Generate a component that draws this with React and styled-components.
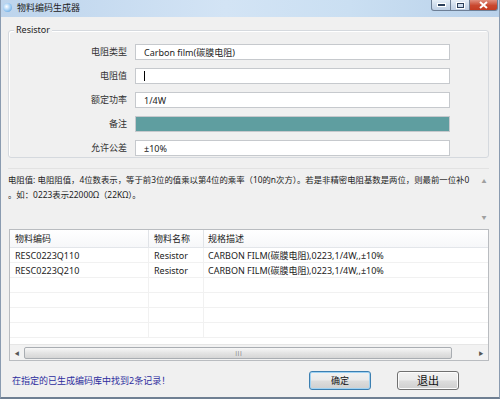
import React from 'react';
import styled, { createGlobalStyle } from 'styled-components';

const GlobalStyle = createGlobalStyle`
  html, body {
    margin: 0;
    padding: 0;
    background: #f0f0f0;
  }
  body {
    font-family: "Noto Sans", "Noto Sans CJK SC", sans-serif;
    font-size: 9px;
    color: #1e1e1e;
  }
`;

const Window = styled.div`
  width: 500px;
  height: 399px;
  box-sizing: border-box;
  display: flex;
  flex-direction: column;
  background: #f0f0f0;
  border-left: 1px solid #8a9bb0;
  border-right: 1px solid #8a9bb0;
  border-bottom: 2px solid #6f7f92;
  overflow: hidden;
`;

const TitleBar = styled.div`
  height: 17px;
  flex-shrink: 0;
  display: flex;
  align-items: flex-start;
  background: linear-gradient(90deg, #bdd4ec 0%, #d3e4f5 45%, #cadff2 70%, #b9d1ea 100%);
`;

const TitleIcon = styled.div`
  width: 9px;
  height: 9px;
  margin: 3px 5px 0 2px;
  border-radius: 50%;
  background: radial-gradient(circle at 40% 40%, #ffffff 0%, #8fc3f0 60%, #3d86c8 100%);
`;

const TitleText = styled.span`
  font-size: 9px;
  line-height: 15px;
  color: #222;
`;

const Controls = styled.div`
  margin-left: auto;
  margin-right: 1px;
  display: flex;
`;

const CtrlButton = styled.div`
  width: ${p => p.$w}px;
  height: 11px;
  box-sizing: border-box;
  display: flex;
  align-items: center;
  justify-content: center;
  border: 1px solid #6d7f96;
  border-top: none;
  margin-left: -1px;
  background: ${p => p.$close
    ? 'linear-gradient(#e0907f, #c9482f 55%, #c43c22)'
    : 'linear-gradient(#e6eef7, #cddbeb 55%, #bfd0e4)'};
  border-radius: ${p => p.$r || '0'};
`;

const Body = styled.div`
  flex: 1;
  display: flex;
  flex-direction: column;
  padding: 13px 10px 0 7px;
`;

const Group = styled.div`
  position: relative;
  height: 128px;
  box-sizing: border-box;
  border: 1px solid #d5d9de;
  border-radius: 3px;
  box-shadow: inset 1px 1px 0 #fff;
  padding: 13px 0 0 0;
`;

const Legend = styled.span`
  position: absolute;
  top: -7px;
  left: 5px;
  padding: 0 2px;
  background: #f0f0f0;
  font-size: 9px;
  line-height: 12px;
`;

const FieldGrid = styled.div`
  display: grid;
  grid-template-columns: 118px 315px;
  column-gap: 8px;
  row-gap: 8px;
  align-items: center;
`;

const Label = styled.div`
  text-align: right;
  font-size: 9px;
  line-height: 16px;
  color: #333;
`;

const Field = styled.div`
  height: 16px;
  box-sizing: border-box;
  border: 1px solid #c6c9cd;
  background: ${p => p.$bg || '#fff'};
  padding-left: 8px;
  display: flex;
  align-items: center;
  font-size: 9px;
  color: #222;
`;

const Caret = styled.span`
  width: 1px;
  height: 10px;
  background: #000;
`;

const Memo = styled.div`
  margin-top: 10px;
  height: 59px;
  box-sizing: border-box;
  border-top: 1px solid #e2e2e2;
  display: flex;
`;

const MemoText = styled.div`
  flex: 1;
  font-size: 8.4px;
  line-height: 15px;
  padding-top: 3px;
  color: #222;
  white-space: nowrap;
  overflow: hidden;
`;

const VScroll = styled.div`
  width: 10px;
  display: flex;
  flex-direction: column;
  justify-content: space-between;
  align-items: center;
  padding: 8px 0 7px;
  color: #a0a0a0;
  font-size: 5px;
`;

const List = styled.div`
  margin-top: 2px;
  margin-left: 1px;
  height: 132px;
  box-sizing: border-box;
  border: 1px solid #b9bcc0;
  background: #fff;
  display: flex;
  flex-direction: column;
`;

const Rows = styled.div`
  flex: 1;
  overflow: hidden;
`;

const Row = styled.div`
  display: grid;
  grid-template-columns: 139px 55px 1fr;
  height: ${p => (p.$head ? 18 : 15)}px;
  box-sizing: border-box;
  border-bottom: 1px solid ${p => (p.$head ? '#e3e6ea' : '#f1f1f1')};
  background: ${p => (p.$head ? 'linear-gradient(#ffffff, #f6f7f9)' : '#fff')};
  font-size: 9px;
  color: #222;
`;

const Cell = styled.div`
  display: flex;
  align-items: center;
  padding-left: ${p => p.$pl || 5}px;
  border-right: 1px solid ${p => (p.$head ? '#e0e3e7' : '#f1f1f1')};
  white-space: nowrap;
  overflow: hidden;
  &:last-child {
    border-right: none;
  }
`;

const HScroll = styled.div`
  height: 15px;
  display: flex;
  align-items: center;
  background: #f2f2f2;
  border-top: 1px solid #e6e6e6;
`;

const Arrow = styled.div`
  width: 14px;
  display: flex;
  justify-content: center;
  color: #555;
  font-size: 5px;
  margin-left: ${p => (p.$end ? 'auto' : '0')};
`;

const Thumb = styled.div`
  height: 12px;
  width: 428px;
  box-sizing: border-box;
  border: 1px solid #a9adb2;
  border-radius: 2px;
  background: linear-gradient(#f7f7f7, #e4e4e4 50%, #d6d6d6);
  display: flex;
  align-items: center;
  justify-content: center;
  color: #666;
  font-size: 6px;
  letter-spacing: -1px;
`;

const Footer = styled.div`
  display: flex;
  align-items: center;
  height: 34px;
  padding-top: 2px;
  padding-right: 30px;
`;

const Status = styled.div`
  font-size: 9px;
  color: #2d2d9e;
  padding-left: 4px;
  margin-right: auto;
`;

const Buttons = styled.div`
  display: flex;
  gap: 26px;
`;

const Button = styled.div`
  width: 62px;
  height: 19px;
  box-sizing: border-box;
  display: flex;
  align-items: center;
  justify-content: center;
  border: 1px solid ${p => (p.$focus ? '#3c7fb1' : '#707070')};
  border-radius: 3px;
  background: linear-gradient(#f2f2f2, #ebebeb 48%, #dddddd 52%, #cfcfcf);
  box-shadow: inset 0 0 0 1px ${p => (p.$focus ? '#9fd2f3' : '#fcfcfc')};
  font-size: ${p => p.$fs}px;
  color: #111;
`;

const records = [
  { code: 'RESC0223Q110', name: 'Resistor', spec: 'CARBON FILM(碳膜电阻),0223,1/4W,,±10%' },
  { code: 'RESC0223Q210', name: 'Resistor', spec: 'CARBON FILM(碳膜电阻),0223,1/4W,,±10%' },
];

const App = () => {
  const empty = Array.from({ length: 4 });
  return (
    <>
      <GlobalStyle />
      <Window>
        <TitleBar>
          <TitleIcon />
          <TitleText>物料编码生成器</TitleText>
          <Controls>
            <CtrlButton $w={20} $r="0 0 0 3px">
              <svg width="9" height="4"><rect x="0.5" y="0.5" width="8" height="3" fill="#2b3f5a" stroke="#fff" strokeWidth="1" /></svg>
            </CtrlButton>
            <CtrlButton $w={20}>
              <svg width="9" height="7"><rect x="0.5" y="0.5" width="8" height="6" fill="none" stroke="#fff" strokeWidth="1" /><rect x="1.5" y="1.5" width="6" height="4" fill="none" stroke="#2b3f5a" strokeWidth="1" /></svg>
            </CtrlButton>
            <CtrlButton $w={29} $close $r="0 0 3px 0">
              <svg width="9" height="8"><path d="M1 1 L8 7 M8 1 L1 7" stroke="#fff" strokeWidth="2" /></svg>
            </CtrlButton>
          </Controls>
        </TitleBar>
        <Body>
          <Group>
            <Legend>Resistor</Legend>
            <FieldGrid>
              <Label>电阻类型</Label>
              <Field>Carbon film(碳膜电阻)</Field>
              <Label>电阻值</Label>
              <Field><Caret /></Field>
              <Label>额定功率</Label>
              <Field>1/4W</Field>
              <Label>备注</Label>
              <Field $bg="#5f9ea0" />
              <Label>允许公差</Label>
              <Field>±10%</Field>
            </FieldGrid>
          </Group>
          <Memo>
            <MemoText>
              电阻值: 电阻阻值，4位数表示，等于前3位的值乘以第4位的乘率（10的n次方）。若是非精密电阻基数是两位，则最前一位补0
              <br />
              。如：0223表示22000Ω（22KΩ）。
            </MemoText>
            <VScroll>
              <span>▲</span>
              <span>▼</span>
            </VScroll>
          </Memo>
          <List>
            <Rows>
              <Row $head>
                <Cell $head>物料编码</Cell>
                <Cell $head>物料名称</Cell>
                <Cell $head $pl={4}>规格描述</Cell>
              </Row>
              {records.map(r => (
                <Row key={r.code}>
                  <Cell>{r.code}</Cell>
                  <Cell>{r.name}</Cell>
                  <Cell $pl={4}>{r.spec}</Cell>
                </Row>
              ))}
              {empty.map((_, i) => (
                <Row key={i}>
                  <Cell />
                  <Cell />
                  <Cell />
                </Row>
              ))}
            </Rows>
            <HScroll>
              <Arrow>◀</Arrow>
              <Thumb>|||</Thumb>
              <Arrow $end>▶</Arrow>
            </HScroll>
          </List>
          <Footer>
            <Status>在指定的已生成编码库中找到2条记录！</Status>
            <Buttons>
              <Button $focus $fs={9}>确定</Button>
              <Button $fs={11}>退出</Button>
            </Buttons>
          </Footer>
        </Body>
      </Window>
    </>
  );
};

export default App;
